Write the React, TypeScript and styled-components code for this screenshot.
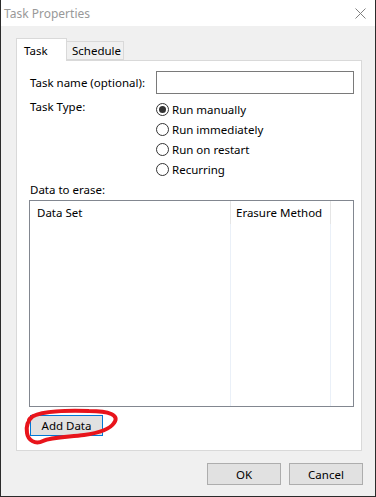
import React from "react";
import styled, { createGlobalStyle } from "styled-components";

const Global = createGlobalStyle`
  html, body { margin: 0; padding: 0; background: #fff; }
  body { font-family: "Noto Sans", "Liberation Sans", sans-serif; font-size: 11.5px; color: #000; }
  * { box-sizing: border-box; }
`;

const Window = styled.div`
  width: 376px;
  height: 497px;
  display: flex;
  flex-direction: column;
  border: 1px solid #2b2b2b;
  border-top: none;
  background: #f0f0f0;
`;

const TitleBar = styled.div`
  height: 26px;
  background: #fff;
  display: flex;
  align-items: center;
  justify-content: space-between;
  padding: 0 9px 0 3px;
`;

const Title = styled.span`
  color: #999;
  font-size: 12px;
`;

const Body = styled.div`
  flex: 1;
  display: flex;
  flex-direction: column;
  padding: 12px 13px 0 15px;
`;

const Tabs = styled.div`
  display: flex;
  align-items: flex-end;
  height: 22px;
  position: relative;
  z-index: 1;
`;

const Tab = styled.div<{ $active?: boolean }>`
  height: ${(p) => (p.$active ? "23px" : "19px")};
  width: ${(p) => (p.$active ? "51px" : "57px")};
  background: ${(p) => (p.$active ? "#fff" : "#f0f0f0")};
  border: 1px solid #d9d9d9;
  border-bottom: ${(p) => (p.$active ? "none" : "1px solid #d9d9d9")};
  border-left: ${(p) => (p.$active ? "1px solid #d9d9d9" : "none")};
  margin-bottom: ${(p) => (p.$active ? "-1px" : "0")};
  padding: ${(p) => (p.$active ? "1px 0 0 7px" : "0 0 0 5px")};
  display: flex;
  align-items: center;
  font-size: 11.5px;
`;

const Panel = styled.div`
  width: 346px;
  height: 391px;
  background: #fff;
  border: 1px solid #d9d9d9;
  padding: 10px 7px 0 12px;
  display: flex;
  flex-direction: column;
`;

const FormGrid = styled.div`
  display: grid;
  grid-template-columns: 127px 1fr;
  row-gap: 5px;
`;

const Label = styled.div<{ $center?: boolean }>`
  font-size: 11.5px;
  padding-left: 1px;
  line-height: 16px;
  align-self: ${(p) => (p.$center ? "center" : "start")};
`;

const TextInput = styled.div`
  height: 23px;
  border: 1px solid #7a7a7a;
  background: #fff;
`;

const RadioGroup = styled.div`
  display: flex;
  flex-direction: column;
`;

const RadioRow = styled.div`
  height: 20px;
  display: flex;
  align-items: center;
  gap: 3px;
  font-size: 11.5px;
`;

const RadioCircle = styled.span<{ $checked?: boolean }>`
  width: 13px;
  height: 13px;
  border-radius: 50%;
  border: 1px solid #333;
  display: flex;
  align-items: center;
  justify-content: center;
  &::after {
    content: "";
    width: 7px;
    height: 7px;
    border-radius: 50%;
    background: ${(p) => (p.$checked ? "#333" : "transparent")};
  }
`;

const SectionLabel = styled.div`
  height: 21px;
  display: flex;
  align-items: center;
  padding-left: 1px;
  font-size: 11.5px;
`;

const ListBox = styled.div`
  width: 325px;
  height: 207px;
  border: 1px solid #828790;
  background: #fff;
  display: flex;
`;

const Column = styled.div<{ $w: number }>`
  width: ${(p) => p.$w}px;
  border-right: 1px solid #eaf0f8;
  display: flex;
  flex-direction: column;
`;

const ColHeader = styled.div<{ $pad: number }>`
  height: 23px;
  display: flex;
  align-items: center;
  padding-left: ${(p) => p.$pad}px;
  font-size: 11.5px;
  margin-right: -1px;
  border-right: 1px solid #e5e5e5;
`;

const FillColumn = styled.div`
  flex: 1;
`;

const AddRow = styled.div`
  margin-top: 8px;
  position: relative;
  padding-left: 1px;
`;

const Button = styled.button<{ $focus?: boolean; $w: number; $h: number }>`
  width: ${(p) => p.$w}px;
  height: ${(p) => p.$h}px;
  background: #e1e1e1;
  border: 1px solid ${(p) => (p.$focus ? "#0078d7" : "#adadad")};
  font-family: inherit;
  font-size: 11.5px;
  color: #000;
  padding: 0;
  display: flex;
  align-items: center;
  justify-content: center;
`;

const Scribble = styled.svg`
  position: absolute;
  left: -8px;
  top: -10px;
  pointer-events: none;
`;

const Footer = styled.div`
  display: flex;
  justify-content: flex-end;
  gap: 8px;
  margin-top: 12px;
  margin-right: -1px;
`;

export default function App() {
  return (
    <>
      <Global />
      <Window>
        <TitleBar>
          <Title>Task Properties</Title>
          <svg width="11" height="11" viewBox="0 0 11 11">
            <path d="M0.5 0.5 L10.5 10.5 M10.5 0.5 L0.5 10.5" stroke="#808080" strokeWidth="1" />
          </svg>
        </TitleBar>
        <Body>
          <Tabs>
            <Tab $active>Task</Tab>
            <Tab>Schedule</Tab>
          </Tabs>
          <Panel>
            <FormGrid>
              <Label $center>Task name (optional):</Label>
              <TextInput />
              <Label>Task Type:</Label>
              <RadioGroup>
                <RadioRow><RadioCircle $checked />Run manually</RadioRow>
                <RadioRow><RadioCircle />Run immediately</RadioRow>
                <RadioRow><RadioCircle />Run on restart</RadioRow>
                <RadioRow><RadioCircle />Recurring</RadioRow>
              </RadioGroup>
            </FormGrid>
            <SectionLabel>Data to erase:</SectionLabel>
            <ListBox>
              <Column $w={201}>
                <ColHeader $pad={7}>Data Set</ColHeader>
              </Column>
              <Column $w={100}>
                <ColHeader $pad={5}>Erasure Method</ColHeader>
              </Column>
              <FillColumn />
            </ListBox>
            <AddRow>
              <Button $focus $w={73} $h={21}>Add Data</Button>
              <Scribble width="100" height="44" viewBox="22 406 100 44">
                <path
                  d="M30 421 C34 413, 60 411, 90 412 C110 412, 121 416, 115 424 C111 430, 100 434, 85 436 C70 438, 52 438, 44 442 C36 446, 29 441, 28 434 C27 428, 28 422, 34 417"
                  fill="none"
                  stroke="#e8141b"
                  strokeWidth="4"
                  strokeLinecap="round"
                />
              </Scribble>
            </AddRow>
          </Panel>
          <Footer>
            <Button $w={74} $h={22}>OK</Button>
            <Button $w={74} $h={22}>Cancel</Button>
          </Footer>
        </Body>
      </Window>
    </>
  );
}
